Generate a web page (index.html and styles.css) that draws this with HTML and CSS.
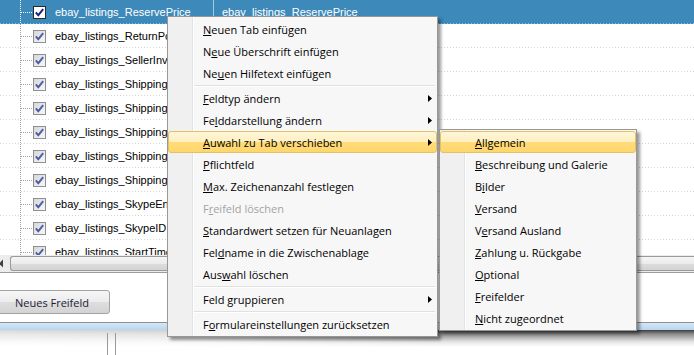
FILE: index.html
```html
<html>
  <head>
    <link rel="stylesheet" href="styles.css">
  </head>
  <body>
    <svg class="defs" width="0" height="0">
      <symbol id="tick" viewBox="0 0 11 11">
        <path d="M1.8 5.4 L4.3 8.2 L9.2 2.2" fill="none" stroke="currentColor" stroke-width="1.9" />
      </symbol>
      <symbol id="more" viewBox="0 0 4 7">
        <path d="M0 0 L4 3.5 L0 7 Z" fill="#000" />
      </symbol>
    </svg>

    <div class="grid">
      <div class="row selected">
        <div class="tree"></div>
        <span class="check"><svg><use href="#tick" /></svg></span>
        <div class="name">ebay_listings_ReservePrice</div>
        <div class="caption">ebay_listings_ReservePrice</div>
      </div>
      <div class="row">
        <div class="tree"></div>
        <span class="check"><svg><use href="#tick" /></svg></span>
        <div class="name">ebay_listings_ReturnPolicy</div>
        <div class="caption"></div>
      </div>
      <div class="row">
        <div class="tree"></div>
        <span class="check"><svg><use href="#tick" /></svg></span>
        <div class="name">ebay_listings_SellerInventoryID</div>
        <div class="caption"></div>
      </div>
      <div class="row">
        <div class="tree"></div>
        <span class="check"><svg><use href="#tick" /></svg></span>
        <div class="name">ebay_listings_ShippingIrregular</div>
        <div class="caption"></div>
      </div>
      <div class="row">
        <div class="tree"></div>
        <span class="check"><svg><use href="#tick" /></svg></span>
        <div class="name">ebay_listings_ShippingService</div>
        <div class="caption"></div>
      </div>
      <div class="row">
        <div class="tree"></div>
        <span class="check"><svg><use href="#tick" /></svg></span>
        <div class="name">ebay_listings_ShippingServiceCost</div>
        <div class="caption"></div>
      </div>
      <div class="row">
        <div class="tree"></div>
        <span class="check"><svg><use href="#tick" /></svg></span>
        <div class="name">ebay_listings_ShippingSurcharge</div>
        <div class="caption"></div>
      </div>
      <div class="row">
        <div class="tree"></div>
        <span class="check"><svg><use href="#tick" /></svg></span>
        <div class="name">ebay_listings_ShippingType</div>
        <div class="caption"></div>
      </div>
      <div class="row">
        <div class="tree"></div>
        <span class="check"><svg><use href="#tick" /></svg></span>
        <div class="name">ebay_listings_SkypeEnabled</div>
        <div class="caption"></div>
      </div>
      <div class="row">
        <div class="tree"></div>
        <span class="check"><svg><use href="#tick" /></svg></span>
        <div class="name">ebay_listings_SkypeID</div>
        <div class="caption"></div>
      </div>
      <div class="row">
        <div class="tree"></div>
        <span class="check"><svg><use href="#tick" /></svg></span>
        <div class="name">ebay_listings_StartTime</div>
        <div class="caption"></div>
      </div>
    </div>

    <div class="hscroll">
      <div class="hscroll-btn">
        <svg width="9" height="17"><path d="M-1 8.5 L3 4.5 L3 12.5 Z" fill="#404040" /></svg>
      </div>
      <div class="hscroll-thumb"></div>
    </div>

    <div class="toolbar">
      <button class="btn">Neues Freifeld</button>
    </div>
    <div class="statusbar"></div>
    <div class="below">
      <div class="splitter"></div>
    </div>

    <!-- context menu -->
    <div class="menu main-menu">
      <div class="item"><span><u>N</u>euen Tab einfügen</span></div>
      <div class="item"><span>N<u>e</u>ue Überschrift einfügen</span></div>
      <div class="item"><span>Ne<u>u</u>en Hilfetext einfügen</span></div>
      <div class="sep"></div>
      <div class="item"><span><u>F</u>eldtyp ändern</span><svg class="arrow"><use href="#more" /></svg></div>
      <div class="item"><span>Fe<u>l</u>ddarstellung ändern</span><svg class="arrow"><use href="#more" /></svg></div>
      <div class="item hot"><span><u>A</u>uwahl zu Tab verschieben</span><svg class="arrow"><use href="#more" /></svg></div>
      <div class="item"><span><u>P</u>flichtfeld</span></div>
      <div class="item"><span><u>M</u>ax. Zeichenanzahl festlegen</span></div>
      <div class="item disabled"><span>F<u>r</u>eifeld löschen</span></div>
      <div class="item"><span><u>S</u>tandardwert setzen für Neuanlagen</span></div>
      <div class="item"><span>Fel<u>d</u>name in die Zwischenablage</span></div>
      <div class="item"><span>Aus<u>w</u>ahl löschen</span></div>
      <div class="sep"></div>
      <div class="item"><span>Feld <u>g</u>ruppieren</span><svg class="arrow"><use href="#more" /></svg></div>
      <div class="sep"></div>
      <div class="item"><span>F<u>o</u>rmulareinstellungen zurücksetzen</span></div>
    </div>

    <div class="menu sub-menu">
      <div class="item hot"><span><u>A</u>llgemein</span></div>
      <div class="item"><span><u>B</u>eschreibung und Galerie</span></div>
      <div class="item"><span>B<u>i</u>lder</span></div>
      <div class="item"><span><u>V</u>ersand</span></div>
      <div class="item"><span>V<u>e</u>rsand Ausland</span></div>
      <div class="item"><span><u>Z</u>ahlung u. Rückgabe</span></div>
      <div class="item"><span><u>O</u>ptional</span></div>
      <div class="item"><span><u>F</u>reifelder</span></div>
      <div class="item"><span><u>N</u>icht zugeordnet</span></div>
    </div>
  </body>
</html>
```

FILE: styles.css
```css
body {
  margin: 0;
  width: 694px;
  height: 355px;
  overflow: hidden;
  position: relative;
  background-color: #fff;
  font-family: "Liberation Sans", Arial, sans-serif;
  color: #000;
}
.defs {
  position: absolute;
}

/* field list */
.grid {
  height: 255px;
  overflow: hidden;
  font-size: 11px;
}
.row {
  display: flex;
  align-items: center;
  height: 24px;
  white-space: nowrap;
  background-image: repeating-linear-gradient(to right, #d4d4d4 0 1px, transparent 1px 3px);
  background-size: 100% 1px;
  background-position: left bottom;
  background-repeat: no-repeat;
}
.row.selected {
  background-color: #3d89b9;
  background-image: repeating-linear-gradient(to right, #8dbde0 0 1px, transparent 1px 3px);
  color: #fff;
}
.tree {
  flex: none;
  width: 33px;
  align-self: stretch;
  background-image: repeating-linear-gradient(to bottom, #a0a0a0 0 1px, transparent 1px 2px),
    repeating-linear-gradient(to right, #a0a0a0 0 1px, transparent 1px 2px);
  background-size: 1px 100%, 11px 1px;
  background-position: 20px 0, 21px 12px;
  background-repeat: no-repeat;
}
.selected .tree {
  background-image: repeating-linear-gradient(to bottom, #fff 0 1px, transparent 1px 2px),
    repeating-linear-gradient(to right, #fff 0 1px, transparent 1px 2px);
}
.check {
  flex: none;
  display: flex;
  width: 13px;
  height: 13px;
  box-sizing: border-box;
  border: 1px solid #8e8f8f;
  background: linear-gradient(135deg, #d6d6d6, #f8f8f8);
  color: #4a5ea8;
}
.check svg {
  width: 11px;
  height: 11px;
}
.selected .check {
  border-color: #2a2a2a;
  background: #fff;
  color: #17207a;
}
.name {
  flex: none;
  width: 158px;
  margin-left: 9px;
  overflow: hidden;
}
.caption {
  flex: 1;
  align-self: stretch;
  display: flex;
  align-items: center;
  padding-left: 8px;
  border-left: 1px solid transparent;
}
.selected .caption {
  border-left-color: #a6c9e3;
}

/* horizontal scrollbar */
.hscroll {
  display: flex;
  height: 17px;
  background-color: #ececec;
}
.hscroll-btn {
  flex: none;
  width: 9px;
}
.hscroll-thumb {
  flex: 1;
  margin: 1px 0 1px 1px;
  border: 1px solid #9a9a9a;
  border-right: none;
  border-radius: 3px 0 0 3px;
  background: linear-gradient(#f6f6f6, #ebebeb 50%, #dcdcdc 51%, #d4d4d4);
}

/* button panel */
.toolbar {
  height: 49px;
  border-top: 1px solid #9c9c9c;
  display: flex;
  align-items: flex-start;
}
.btn {
  margin: 17px 0 0 -6px;
  width: 116px;
  height: 24px;
  border: 1px solid #a3a3a3;
  border-radius: 3px;
  background: linear-gradient(#f6f6f6, #ececec 50%, #dedede 51%, #d3d3d3);
  font-family: "Open Sans", sans-serif;
  font-size: 11px;
  color: #1c1c38;
  padding: 0;
}
.statusbar {
  height: 8px;
  box-sizing: border-box;
  border-top: 1px solid #8f8f8f;
  background: linear-gradient(#d6e6f3, #b9d6ef);
}
.below {
  height: 25px;
  box-sizing: border-box;
  padding-top: 3px;
  background: linear-gradient(to right, rgba(255, 255, 255, 0.8), rgba(255, 255, 255, 0.75) 30%, rgba(255, 255, 255, 0) 64%),
    linear-gradient(to bottom, #3e3e3e, #8c8c8c 4px, #e6e6e6 12px, #fff 17px);
}
.splitter {
  margin-left: 107px;
  width: 7px;
  height: 22px;
  border-left: 1px solid #9a9a9a;
  border-right: 1px solid #9a9a9a;
}

/* context menus */
.menu {
  position: absolute;
  box-sizing: border-box;
  border: 1px solid #979797;
  padding: 1px 0;
  font-family: "Open Sans", sans-serif;
  font-size: 11px;
  background: linear-gradient(to right, #f0f0f0 24px, #e2e3e3 24px 25px, #fff 25px 26px, #f7f7f7 26px);
  box-shadow: 3px 3px 3px rgba(0, 0, 0, 0.4);
}
.main-menu {
  left: 167px;
  top: 16px;
  width: 271px;
}
.sub-menu {
  left: 439px;
  top: 129px;
  width: 198px;
}
.item {
  display: flex;
  align-items: center;
  height: 22px;
  box-sizing: border-box;
  padding: 0 5px 0 35px;
  white-space: nowrap;
}
.item.hot {
  border: 1px solid #e3c166;
  border-radius: 3px;
  padding: 0 4px 0 34px;
  background: linear-gradient(#fff6d9, #fdefbe 50%, #ffdc7a 51%, #ffd66c);
}
.item.disabled {
  color: #a3a3a3;
}
.arrow {
  margin-left: auto;
  width: 4px;
  height: 7px;
}
.sep {
  height: 1px;
  margin: 1px 2px 0 26px;
  background-color: #e0e0e0;
  border-bottom: 1px solid #fff;
}
```
